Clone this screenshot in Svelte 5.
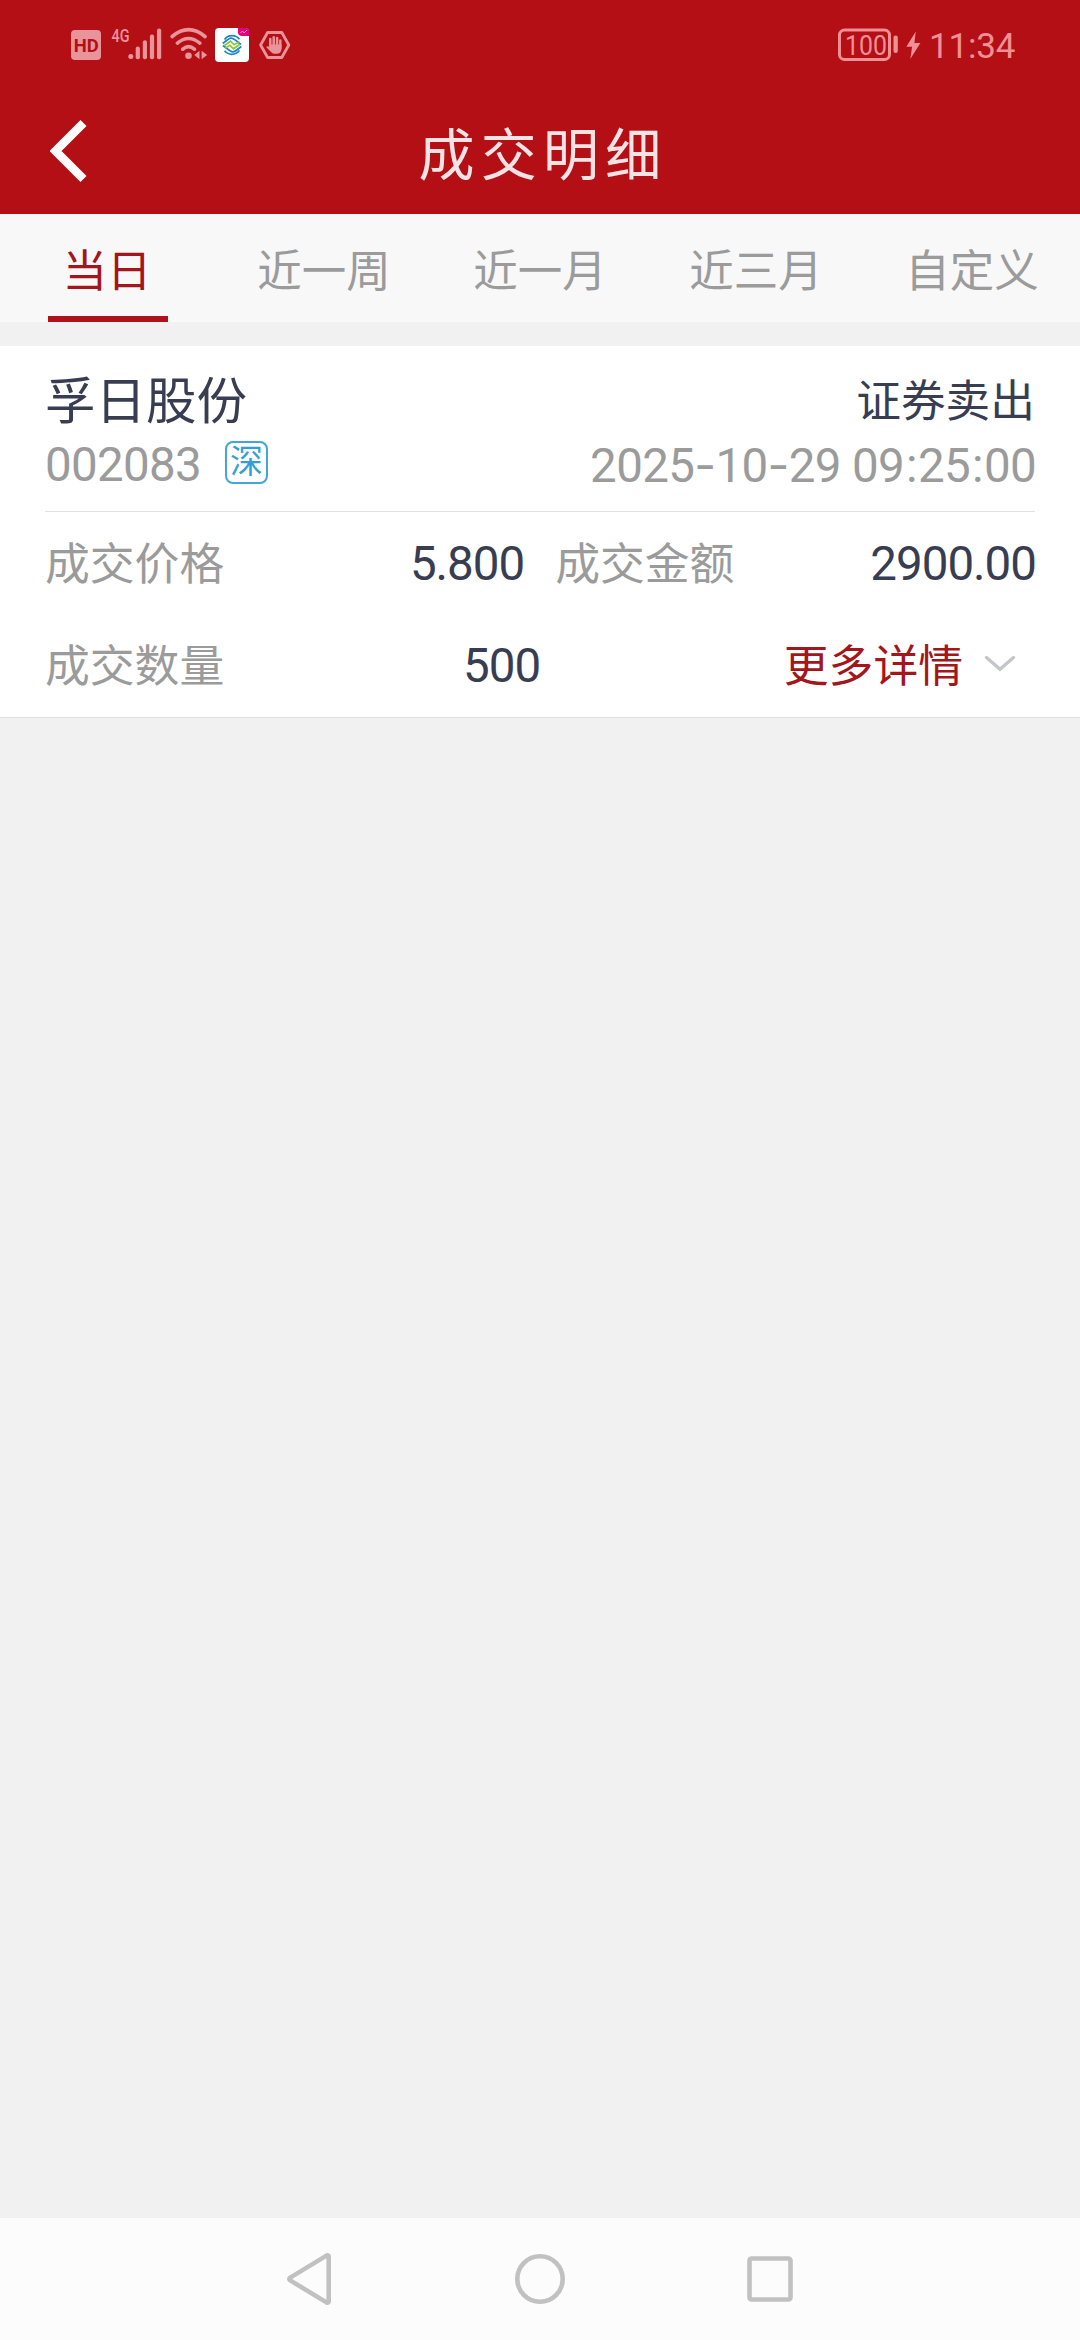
<script lang="ts">
  interface Tab {
    id: string;
    label: string;
  }

  const TABS: Tab[] = [
    { id: 'today', label: '当日' },
    { id: 'week', label: '近一周' },
    { id: 'month', label: '近一月' },
    { id: 'quarter', label: '近三月' },
    { id: 'custom', label: '自定义' },
  ];

  const deal = {
    name: '孚日股份',
    code: '002083',
    market: '深',
    side: '证券卖出',
    time: '2025-10-29 09:25:00',
    price: '5.800',
    amount: '2900.00',
    count: '500',
  };

  let activeTab = $state('today');
</script>

<div class="screen">
  <header class="top">
    <div class="status">
      <svg class="status-left" width="230" height="44" viewBox="66 22 230 44">
        <g fill="#e8949a">
          <rect x="71" y="30" width="30" height="30" rx="4" />
          <text class="hd" x="73.7" y="51.5" textLength="25" lengthAdjust="spacingAndGlyphs">HD</text>
          <text class="net" x="111.5" y="42.2" textLength="18" lengthAdjust="spacingAndGlyphs">4G</text>
          <circle cx="130.8" cy="56.5" r="2.5" />
          <rect x="135.7" y="46.5" width="4.2" height="12.7" rx="2" />
          <rect x="142.8" y="40.3" width="4.2" height="18.9" rx="2" />
          <rect x="149.9" y="34.6" width="4.2" height="24.6" rx="2" />
          <rect x="157" y="28.6" width="4.2" height="30.6" rx="2" />
          <circle cx="188.5" cy="55.8" r="3.3" />
          <path d="M199.5 50.7v8.6l-5.2-4.3zM201.6 50.7v8.6l5.6-4.3z" />
        </g>
        <g fill="none" stroke="#e8949a" stroke-width="3.6" stroke-linecap="round">
          <path d="M172.2 36.5q16.3-13.6 32.8 0M177.4 43.2q11.1-9.4 22.4 0M182.8 49.2q5.8-5 11.6 0" />
        </g>

        <rect x="215" y="28" width="34" height="34" rx="4" fill="#fff" />
        <path d="M238 28h8q3 0 3 3v5h-7q-4 0-4-4z" fill="#e6007e" />
        <path d="M240.5 33l2-2 1.5 2 3-3" fill="none" stroke="#f6a5cf" stroke-width="1" />
        <g fill="none" stroke-width="1.7">
          <path d="M224.500 39.500q3-3.800 7.500-3.800 4.500 0 7.500 3.500M222.800 43.500q6.700-5.800 8.700-5.300 2 .2 9.500 6.300" stroke="#1c86c6" />
          <path d="M239.500 50.500q-3 3.800-7.500 3.800-4.500 0-7.500-3.500M241.200 46.500q-6.700 5.800-8.700 5.300-2-.2-9.500-6.300" stroke="#1c86c6" />
          <path d="M224.500 45.500l6-4.300 3.500 3.600 5.500-3M225 48.300l5-3 3.500 3.500 6-4.300" stroke="#8cc63f" />
        </g>

        <path d="M267.6 32.5h14.2l7 12.5-7 12.5h-14.2l-7-12.5z" fill="none" stroke="#e8949a" stroke-width="2.8" stroke-linejoin="round" />
        <path d="M270.3 39v8M273.7 37.3v9M277.1 37.9v9M280.3 40.4v7.6" stroke="#e8949a" stroke-width="2.5" stroke-linecap="round" />
        <path d="M269.1 44.5h12.4v4.7q-.6 4.6-5 4.6h-2.2q-2 0-3.5-2l-4.5-4.6q.7-1.500 2.800-.4z" fill="#e8949a" />
      </svg>

      <svg class="status-right" width="190" height="44" viewBox="832 22 190 44">
        <rect x="839.5" y="30" width="50" height="29.5" rx="5" fill="none" stroke="#f09095" stroke-width="3" />
        <rect x="893.5" y="35.5" width="4.3" height="17.5" rx="2" fill="#f09095" />
        <path d="M915.8 31.5l-9.500 15.200h5.800l-1.800 12.300 10.100-16.100h-6z" fill="#f09095" />
        <g fill="#f09095">
          <text class="level" x="845" y="54.8" textLength="42" lengthAdjust="spacingAndGlyphs">100</text>
          <text class="clock" x="929" y="58" textLength="86.5" lengthAdjust="spacing">11:34</text>
        </g>
      </svg>
    </div>

    <div class="titlebar">
      <button class="back" aria-label="返回">
        <svg width="40" height="64" viewBox="0 0 40 64">
          <path d="M33.500 4L5.500 32l28 28" fill="none" stroke="#fff" stroke-width="8.500" />
        </svg>
      </button>
      <h1>成交明细</h1>
    </div>
  </header>

  <nav class="tabs">
    {#each TABS as tab (tab.id)}
      <button class="tab" class:active={activeTab === tab.id} onclick={() => (activeTab = tab.id)}>
        <span>{tab.label}</span>
      </button>
    {/each}
  </nav>

  <section class="card">
    <div class="summary">
      <div class="line name-line">
        <span class="name">{deal.name}</span>
        <span class="side">{deal.side}</span>
      </div>
      <div class="line code-line">
        <span class="code">{deal.code}</span>
        <span class="market">{deal.market}</span>
        <span class="time">
          {#each deal.time as ch}<span class:dash={ch === '-'} class:colon={ch === ':'}>{ch}</span>{/each}
        </span>
      </div>
    </div>

    <div class="row">
      <span class="label">成交价格</span>
      <span class="value price">{deal.price}</span>
      <span class="label">成交金额</span>
      <span class="value">{deal.amount}</span>
    </div>
    <div class="row">
      <span class="label">成交数量</span>
      <span class="value count">{deal.count}</span>
      <button class="more">
        <span>更多详情</span>
        <svg width="32" height="18" viewBox="0 0 32 18">
          <path d="M2.500 2.500L16 14.300 29.500 2.500" fill="none" stroke="#c5c6cc" stroke-width="3.400" stroke-linecap="round" />
        </svg>
      </button>
    </div>
  </section>

  <footer class="navbar">
    <svg width="50" height="54" viewBox="0 0 50 54">
      <path d="M43.700 4.400v45.200q-.6 1.600-2.200.8L5.200 28.400q-1.900-1.400 0-2.800L41.500 3.600q1.600-.8 2.200.8z" />
    </svg>
    <svg width="54" height="54" viewBox="0 0 54 54">
      <circle cx="27" cy="27" r="22.700" />
    </svg>
    <svg width="50" height="54" viewBox="0 0 50 54">
      <rect x="4.500" y="6.500" width="41" height="41" rx="2" />
    </svg>
  </footer>
</div>

<style>
  :global(body) {
    margin: 0;
    background: #f1f1f1;
  }

  .screen {
    display: flex;
    flex-direction: column;
    width: 1080px;
    height: 2340px;
    overflow: hidden;
    background: #f1f1f1;
    font-family: Roboto, 'Noto Sans CJK SC', sans-serif;
  }

  button {
    padding: 0;
    border: none;
    background: none;
    font: inherit;
    color: inherit;
  }

  svg {
    display: block;
    flex: none;
  }

  .top {
    height: 214px;
    background: #b40f15;
  }

  .status {
    display: flex;
    justify-content: space-between;
    box-sizing: border-box;
    height: 88px;
    padding: 22px 58px 0 66px;
  }

  .hd {
    font: 700 19px Roboto, sans-serif;
    fill: #b40f15;
  }

  .net {
    font: 500 19px Roboto, sans-serif;
  }

  .level {
    font: 400 27px Roboto, sans-serif;
  }

  .clock {
    font: 400 35px Roboto, sans-serif;
  }

  .titlebar {
    display: grid;
    grid-template-columns: 90px 1fr 90px;
    align-items: center;
    height: 126px;
  }

  .back {
    justify-self: end;
    height: 64px;
    margin-bottom: 1px;
  }

  h1 {
    margin: 10px 0 0 6px;
    font-size: 56px;
    font-weight: 400;
    line-height: 80px;
    letter-spacing: 6.3px;
    text-align: center;
    color: #f4e3e5;
  }

  .tabs {
    display: grid;
    grid-template-columns: repeat(5, 216px);
    height: 108px;
    background: #f8f8f8;
  }

  .tab {
    display: flex;
    justify-content: center;
    font-size: 44.5px;
    line-height: 64px;
    color: #9b9b9b;
  }

  .tab span {
    box-sizing: border-box;
    width: 136px;
    height: 108px;
    padding-top: 26px;
    text-align: center;
    white-space: nowrap;
  }

  .tab.active span {
    width: 120px;
    padding-right: 2px;
    border-bottom: 6px solid #ad1319;
    color: #a3161b;
  }

  .card {
    box-sizing: border-box;
    height: 372px;
    margin-top: 24px;
    padding: 0 45px;
    border-bottom: 1px solid #e0e0e0;
    background: #fff;
  }

  .summary {
    box-sizing: border-box;
    height: 166px;
    padding-top: 17px;
    border-bottom: 1px solid #e2e2e2;
  }

  .line {
    display: flex;
    align-items: center;
  }

  .name-line {
    justify-content: space-between;
    height: 68px;
    color: #383d52;
  }

  .name {
    font-size: 50.5px;
  }

  .side {
    font-size: 44.7px;
  }

  .code-line {
    height: 68px;
    font-size: 47.500px;
    color: #9b9b9b;
  }

  .code {
    letter-spacing: -0.7px;
  }

  .market {
    box-sizing: border-box;
    width: 43px;
    height: 43px;
    margin: 0 0 6px 24px;
    border: 2px solid #45a5d3;
    border-radius: 8px;
    font-size: 33px;
    line-height: 38px;
    text-align: center;
    color: #339fd6;
  }

  .time {
    margin-left: auto;
    margin-right: -1px;
    letter-spacing: -0.65px;
    white-space: pre;
  }

  .dash {
    font-family: Inter, sans-serif;
  }

  .colon {
    padding: 0 1px 0 2px;
  }

  .row {
    display: flex;
    align-items: center;
    height: 102px;
  }

  .label,
  .more span {
    margin-bottom: 6px;
    font-size: 44.8px;
  }

  .label {
    color: #9b9b9b;
  }

  .value {
    flex: 1;
    margin: 2px -1px 0 0;
    font-size: 47.500px;
    letter-spacing: -1px;
    text-align: right;
    color: #383d52;
  }

  .price {
    flex: none;
    width: 300px;
    margin-right: 31px;
  }

  .count {
    flex: none;
    width: 316px;
  }

  .more {
    display: flex;
    align-items: center;
    gap: 21px;
    margin: 0 19px 0 auto;
    color: #a3161b;
  }

  .more svg {
    margin-bottom: 3px;
  }

  .navbar {
    display: flex;
    justify-content: center;
    align-items: center;
    gap: 178px;
    height: 122px;
    margin-top: auto;
    background: #fcfcfc;
  }

  .navbar svg {
    fill: none;
    stroke: #c1c1c1;
    stroke-width: 4.600;
    stroke-linejoin: round;
  }
</style>
